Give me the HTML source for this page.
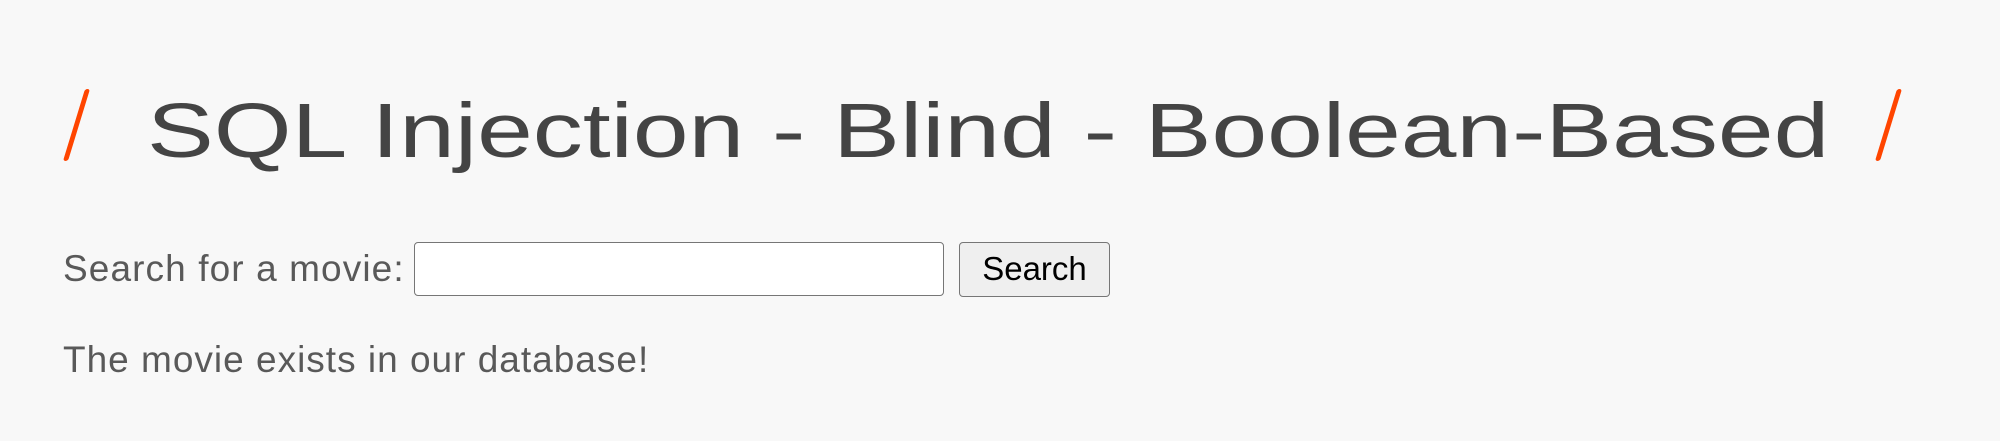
<!DOCTYPE html>
<html><head><style>
html,body{margin:0;padding:0;width:2000px;height:441px;background:#f8f8f8;overflow:hidden;font-family:"Liberation Sans",Arial,sans-serif;}
.t{position:absolute;left:147px;top:93px;font-size:77px;color:#444;white-space:nowrap;line-height:1;transform:scaleX(1.3);transform-origin:0 0;}
.sl{position:absolute;width:5px;height:72px;background:#ff4500;border-radius:3px;transform:skewX(-17deg);}
.lab{position:absolute;left:63px;top:250px;font-size:37px;color:#595959;line-height:1;letter-spacing:1.1px;}
.inp{position:absolute;left:414px;top:242px;width:530px;height:54px;box-sizing:border-box;background:#fff;border:1.5px solid #767676;border-radius:4px;}
.btn{position:absolute;left:959px;top:242px;width:151px;height:55px;box-sizing:border-box;background:#efefef;border:1.5px solid #767676;border-radius:4px;font-size:33px;color:#000;text-align:center;line-height:52px;}
.msg{position:absolute;left:63px;top:341px;font-size:37px;color:#595959;line-height:1;letter-spacing:1px;}
</style></head><body>
<div class="sl" style="left:74px;top:89px"></div>
<div class="t">SQL Injection - Blind - Boolean-Based</div>
<div class="sl" style="left:1886px;top:89px"></div>
<div class="lab">Search for a movie:</div>
<div class="inp"></div>
<div class="btn">Search</div>
<div class="msg">The movie exists in our database!</div>
</body></html>
